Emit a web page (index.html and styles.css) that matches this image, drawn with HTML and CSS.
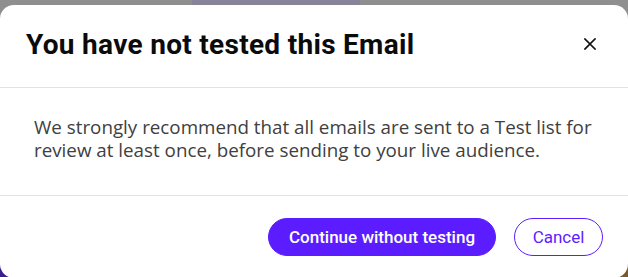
FILE: index.html
```html
<!DOCTYPE html>
<html lang="en">
<head>
<meta charset="utf-8">
<title>You have not tested this Email</title>
<link rel="stylesheet" href="styles.css">
</head>
<body>
<div class="backdrop">
  <div class="strip">
    <span class="strip-gray strip-a"></span>
    <span class="strip-purple"></span>
    <span class="strip-gray strip-b"></span>
  </div>
  <span class="corner corner-left"></span>
  <span class="corner corner-right"></span>
  <div class="dialog" role="dialog" aria-labelledby="dlg-title">
    <header class="dialog-header">
      <h1 class="dialog-title" id="dlg-title">You have not tested this Email</h1>
      <button class="close-btn" type="button" aria-label="Close">
        <svg width="12" height="12" viewBox="0 0 12 12" aria-hidden="true">
          <path d="M1 1 L11 11 M11 1 L1 11" stroke="#111" stroke-width="1.7" fill="none" stroke-linecap="square"/>
        </svg>
      </button>
    </header>
    <section class="dialog-body">
      <p class="dialog-text">We strongly recommend that all emails are sent to a Test list for review at least once, before sending to your live audience.</p>
    </section>
    <footer class="dialog-footer">
      <button class="btn btn-primary" type="button">Continue without testing</button>
      <button class="btn btn-outline" type="button">Cancel</button>
    </footer>
  </div>
</div>
</body>
</html>
```

FILE: styles.css
```css
* { box-sizing: border-box; }

html, body {
  margin: 0;
  padding: 0;
  width: 628px;
  height: 277px;
  overflow: hidden;
  background: #8f8f8f;
  font-family: "Open Sans", "Noto Sans", sans-serif;
}

.backdrop {
  position: relative;
  width: 628px;
  height: 277px;
  padding-top: 5px;
}

.strip {
  position: absolute;
  top: 0;
  left: 0;
  width: 628px;
  height: 5px;
  display: flex;
}
.strip-a { width: 192px; }
.strip-purple { width: 168px; background: #878398; }
.strip-b { flex: 1; }

.corner {
  position: absolute;
  bottom: 0;
  width: 16px;
  height: 14px;
}
.corner-left { left: 0; background: #3a1f8e; }
.corner-right { right: 0; background: #7a5a2a; }

.dialog {
  position: relative;
  width: 628px;
  height: 273px;
  background: #fff;
  border-radius: 14px;
  display: flex;
  flex-direction: column;
}

.dialog-header {
  height: 83px;
  border-bottom: 1px solid #e2e2e2;
  display: flex;
  align-items: center;
  justify-content: space-between;
  padding: 0 26px 0 26px;
}

.dialog-title {
  margin: 0;
  margin-top: -4px;
  font-family: "Roboto", sans-serif;
  font-weight: 700;
  font-size: 28px;
  letter-spacing: 0.3px;
  color: #0b0b0b;
}

.close-btn {
  border: 0;
  background: transparent;
  padding: 0;
  width: 14px;
  height: 14px;
  display: flex;
  align-items: center;
  justify-content: center;
  margin-top: -4px;
  margin-right: 5px;
}

.dialog-body {
  height: 108px;
  border-bottom: 1px solid #e2e2e2;
  padding: 28px 20px 0 34px;
}

.dialog-text {
  margin: 0;
  font-size: 18.8px;
  line-height: 23px;
  color: #404040;
}

.dialog-footer {
  flex: 1;
  display: flex;
  justify-content: flex-end;
  align-items: flex-start;
  gap: 18px;
  padding: 22px 25px 0 0;
}

.btn {
  height: 38px;
  border-radius: 19px;
  font-family: "Roboto", sans-serif;
  font-size: 17px;
  padding: 0;
  white-space: nowrap;
  text-align: center;
  cursor: pointer;
}

.btn-primary {
  width: 228px;
  background: #5b1dff;
  border: 1px solid #5b1dff;
  color: #fff;
  font-weight: 500;
}

.btn-outline {
  width: 89px;
  background: #fff;
  border: 1px solid #5b1dff;
  color: #5b1dff;
  font-weight: 400;
}
```
